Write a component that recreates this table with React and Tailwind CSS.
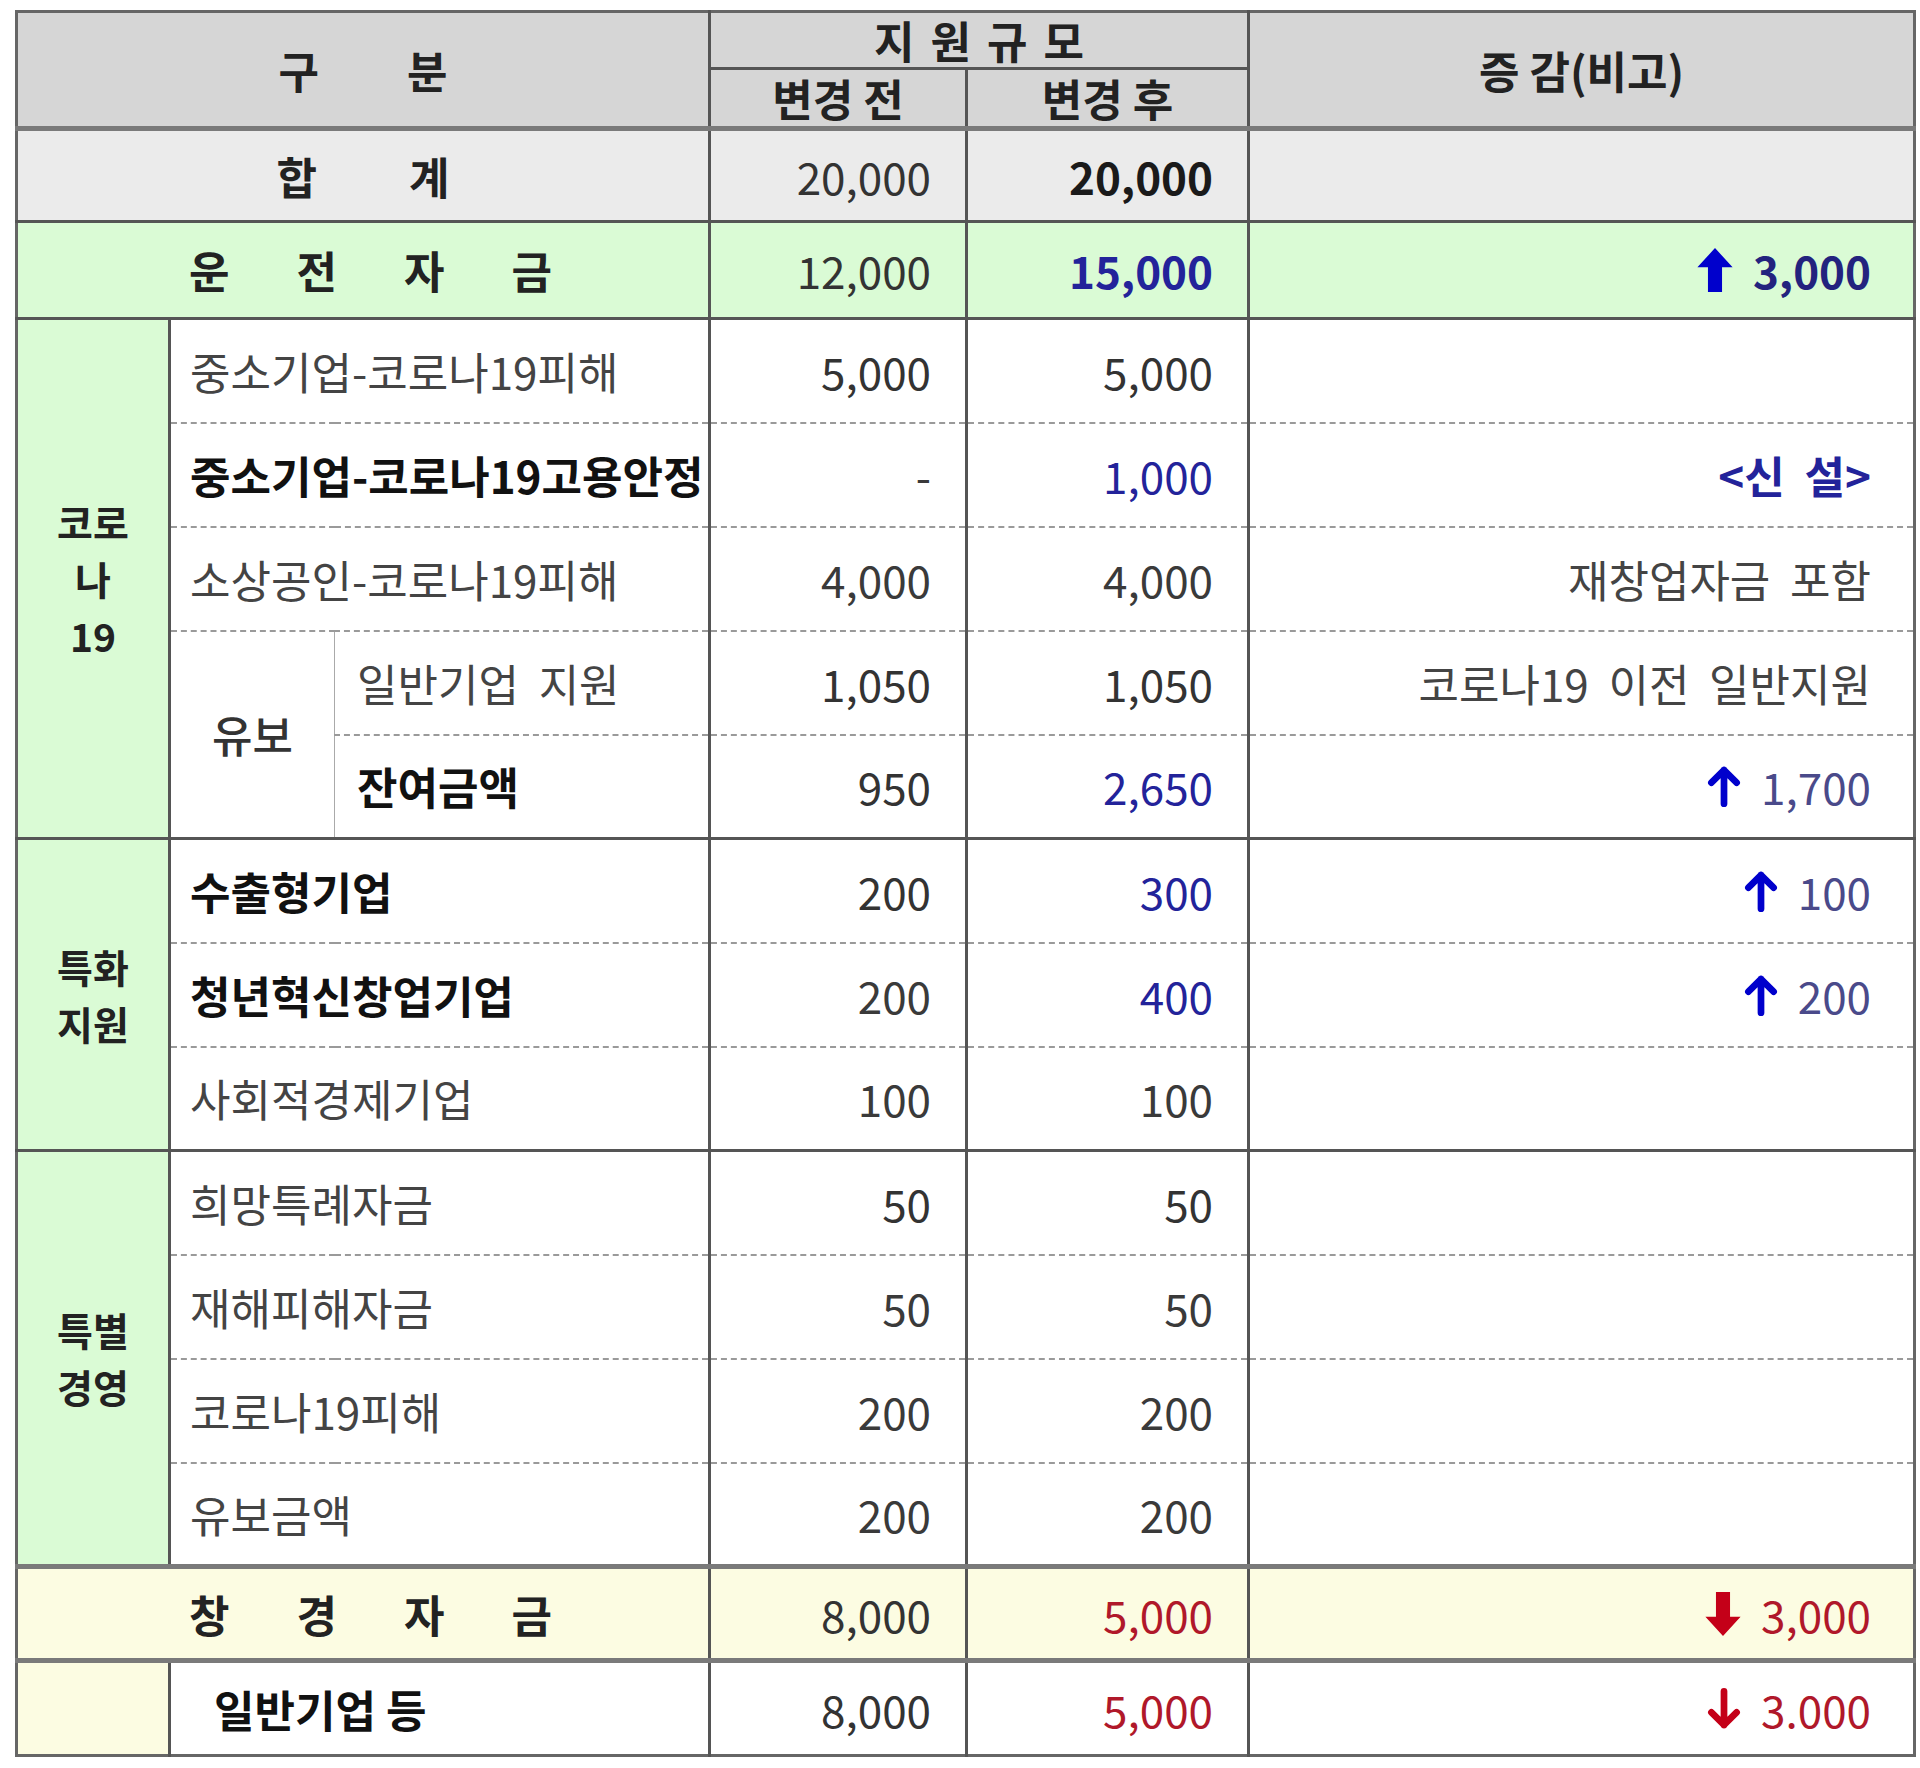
import React from "react";

// 색상
const GREEN = "bg-[#dafbd5]";
const YELLOW = "bg-[#fcfce2]";
const HEAD = "bg-[#d6d6d6]";

function ThickArrow({ down, color }) {
  return (
    <svg
      width="36"
      height="44"
      viewBox="0 0 20 25"
      className={down ? "rotate-180" : ""}
      fill={color}
    >
      <polygon points="10,0 20,11 14,11 14,25 6,25 6,11 0,11" />
    </svg>
  );
}

function ThinArrow({ down, color }) {
  return (
    <svg
      width="34"
      height="42"
      viewBox="0 0 20 25"
      className={down ? "rotate-180" : ""}
      fill="none"
      stroke={color}
      strokeWidth="4"
      strokeLinecap="round"
      strokeLinejoin="round"
    >
      <path d="M10 23 V3 M2.5 10.5 L10 3 L17.5 10.5" />
    </svg>
  );
}

function Spread({ chars, gap }) {
  return (
    <div className={`flex items-center justify-center ${gap}`}>
      {chars.map((c, i) => (
        <span key={i}>{c}</span>
      ))}
    </div>
  );
}

// 세로로 쌓인 구분 라벨
function Stack({ lines }) {
  return (
    <div className="flex flex-col items-center text-[39px] leading-[57px]">
      {lines.map((l, i) => (
        <span key={i}>{l}</span>
      ))}
    </div>
  );
}

const numCell = "text-right pr-[34px] border-r-[3px] border-r-[#555]";
const dash = "border-b-2 [border-bottom-style:dashed] border-b-[#9a9a9a]";
const solid = "border-b-[3px] border-b-[#555]";
const thick = "border-b-[5px] border-b-[#7a7a7a]";

function Row({ label, bold, before, after, afterColor, note, sep, sub }) {
  return (
    <tr className="h-[104px]">
      <td
        colSpan={sub ? 1 : 2}
        className={`${sep} border-r-[3px] border-r-[#555] pl-[19px] ${
          bold ? "font-bold text-[#111]" : "text-[#444]"
        }`}
      >
        {label}
      </td>
      <td className={`${sep} ${numCell} text-[#3a3a3a]`}>{before}</td>
      <td
        className={`${sep} ${numCell} ${
          afterColor || "text-[#3a3a3a]"
        }`}
      >
        {after}
      </td>
      <td className={`${sep} text-right pr-[42px]`}>{note}</td>
    </tr>
  );
}

function Change({ value, thick, down }) {
  const color = down ? "#c40018" : "#0000cc";
  return (
    <div className="flex items-center justify-end gap-[20px]">
      {thick ? (
        <ThickArrow down={down} color={color} />
      ) : (
        <ThinArrow down={down} color={color} />
      )}
      <span
        className={
          down
            ? "text-[#b0182a]"
            : thick
            ? "text-[#23237e] font-bold"
            : "text-[#4a4a8a]"
        }
      >
        {value}
      </span>
    </div>
  );
}

export default function App() {
  return (
    <div
      className="min-h-screen bg-white pt-[10px] pl-[15px] pr-[7px] pb-[10px] text-[44px] text-[#333]"
      style={{ fontFamily: '"Noto Sans CJK KR", "Noto Sans", sans-serif' }}
    >
      <table className="w-[1898px] table-fixed border-collapse border-[3px] border-[#666] leading-none">
        <colgroup>
          <col className="w-[153px]" />
          <col className="w-[165px]" />
          <col className="w-[375px]" />
          <col className="w-[257px]" />
          <col className="w-[282px]" />
          <col className="w-[666px]" />
        </colgroup>
        <thead>
          <tr className={`h-[57px] ${HEAD}`}>
            <th
              colSpan={3}
              rowSpan={2}
              className={`border-r-[3px] border-r-[#555] ${thick} font-bold text-[#222]`}
            >
              <Spread chars={["구", "분"]} gap="gap-[88px]" />
            </th>
            <th
              colSpan={2}
              className="border-r-[3px] border-r-[#555] border-b-[3px] border-b-[#555] font-bold text-[#222]"
            >
              <Spread chars={["지", "원", "규", "모"]} gap="gap-[16px]" />
            </th>
            <th rowSpan={2} className={`${thick} font-bold text-[#222]`}>
              증&nbsp;감(비고)
            </th>
          </tr>
          <tr className={`h-[60px] ${HEAD}`}>
            <th className={`border-r-[3px] border-r-[#555] ${thick} font-bold text-[#222]`}>
              변경&nbsp;전
            </th>
            <th className={`border-r-[3px] border-r-[#555] ${thick} font-bold text-[#222]`}>
              변경&nbsp;후
            </th>
          </tr>
        </thead>
        <tbody>
          {/* 합계 */}
          <tr className="h-[93px] bg-[#ebebeb]">
            <td colSpan={3} className={`${solid} border-r-[3px] border-r-[#555] font-bold text-[#222]`}>
              <Spread chars={["합", "계"]} gap="gap-[92px]" />
            </td>
            <td className={`${solid} ${numCell}`}>20,000</td>
            <td className={`${solid} ${numCell} font-bold text-[#1a1a1a]`}>20,000</td>
            <td className={solid}></td>
          </tr>

          {/* 운전자금 */}
          <tr className={`h-[97px] ${GREEN}`}>
            <td colSpan={3} className={`${solid} border-r-[3px] border-r-[#555] font-bold text-[#222]`}>
              <div className="pl-[171px] flex gap-[67px]">
                <span>운</span>
                <span>전</span>
                <span>자</span>
                <span>금</span>
              </div>
            </td>
            <td className={`${solid} ${numCell}`}>12,000</td>
            <td className={`${solid} ${numCell} font-bold text-[#23239a]`}>15,000</td>
            <td className={`${solid} text-right pr-[42px]`}>
              <Change value="3,000" thick />
            </td>
          </tr>

          {/* 코로나19 */}
          <tr className="h-[104px]">
            <td
              rowSpan={5}
              className={`${GREEN} ${solid} border-r-[3px] border-r-[#555] font-bold text-[#222]`}
            >
              <Stack lines={["코로", "나", "19"]} />
            </td>
            <td colSpan={2} className={`${dash} border-r-[3px] border-r-[#555] pl-[19px] text-[#444]`}>
              중소기업-코로나19피해
            </td>
            <td className={`${dash} ${numCell}`}>5,000</td>
            <td className={`${dash} ${numCell}`}>5,000</td>
            <td className={dash}></td>
          </tr>
          <Row
            label="중소기업-코로나19고용안정"
            bold
            before="-"
            after="1,000"
            afterColor="text-[#23239a]"
            note={<span className="font-bold text-[#23239a]">&lt;신&nbsp;&nbsp;설&gt;</span>}
            sep={dash}
          />
          <Row
            label="소상공인-코로나19피해"
            before="4,000"
            after="4,000"
            note={<span className="text-[#444]">재창업자금&nbsp;&nbsp;포함</span>}
            sep={dash}
          />
          <tr className="h-[104px]">
            <td
              rowSpan={2}
              className={`${solid} border-r border-r-[#aaa] text-center text-[#333] font-medium`}
            >
              유보
            </td>
            <td className={`${dash} border-r-[3px] border-r-[#555] pl-[22px] text-[#444]`}>
              일반기업&nbsp;&nbsp;지원
            </td>
            <td className={`${dash} ${numCell}`}>1,050</td>
            <td className={`${dash} ${numCell}`}>1,050</td>
            <td className={`${dash} text-right pr-[42px] text-[#444]`}>
              코로나19&nbsp;&nbsp;이전&nbsp;&nbsp;일반지원
            </td>
          </tr>
          <tr className="h-[104px]">
            <td className={`${solid} border-r-[3px] border-r-[#555] pl-[22px] font-bold text-[#111]`}>
              잔여금액
            </td>
            <td className={`${solid} ${numCell}`}>950</td>
            <td className={`${solid} ${numCell} text-[#23239a]`}>2,650</td>
            <td className={`${solid} text-right pr-[42px]`}>
              <Change value="1,700" />
            </td>
          </tr>

          {/* 특화지원 */}
          <tr className="h-[104px]">
            <td
              rowSpan={3}
              className={`${GREEN} ${solid} border-r-[3px] border-r-[#555] font-bold text-[#222]`}
            >
              <Stack lines={["특화", "지원"]} />
            </td>
            <td colSpan={2} className={`${dash} border-r-[3px] border-r-[#555] pl-[19px] font-bold text-[#111]`}>
              수출형기업
            </td>
            <td className={`${dash} ${numCell}`}>200</td>
            <td className={`${dash} ${numCell} text-[#23239a]`}>300</td>
            <td className={`${dash} text-right pr-[42px]`}>
              <Change value="100" />
            </td>
          </tr>
          <Row
            label="청년혁신창업기업"
            bold
            before="200"
            after="400"
            afterColor="text-[#23239a]"
            note={<Change value="200" />}
            sep={dash}
          />
          <Row label="사회적경제기업" before="100" after="100" sep={solid} />

          {/* 특별경영 */}
          <tr className="h-[104px]">
            <td
              rowSpan={4}
              className={`${GREEN} ${thick} border-r-[3px] border-r-[#555] font-bold text-[#222]`}
            >
              <Stack lines={["특별", "경영"]} />
            </td>
            <td colSpan={2} className={`${dash} border-r-[3px] border-r-[#555] pl-[19px] text-[#444]`}>
              희망특례자금
            </td>
            <td className={`${dash} ${numCell}`}>50</td>
            <td className={`${dash} ${numCell}`}>50</td>
            <td className={dash}></td>
          </tr>
          <Row label="재해피해자금" before="50" after="50" sep={dash} />
          <Row label="코로나19피해" before="200" after="200" sep={dash} />
          <Row label="유보금액" before="200" after="200" sep={thick} />

          {/* 창경자금 */}
          <tr className={`h-[94px] ${YELLOW}`}>
            <td
              colSpan={3}
              className={`${thick} border-r-[3px] border-r-[#555] font-bold text-[#222]`}
            >
              <div className="pl-[171px] flex gap-[67px]">
                <span>창</span>
                <span>경</span>
                <span>자</span>
                <span>금</span>
              </div>
            </td>
            <td className={`${thick} ${numCell}`}>8,000</td>
            <td className={`${thick} ${numCell} text-[#b0182a]`}>5,000</td>
            <td className={`${thick} text-right pr-[42px]`}>
              <Change value="3,000" thick down />
            </td>
          </tr>

          {/* 일반기업 등 */}
          <tr className="h-[95px]">
            <td className={`${YELLOW} border-r-[3px] border-r-[#555]`}></td>
            <td colSpan={2} className="border-r-[3px] border-r-[#555] pl-[43px] font-bold text-[#111]">
              일반기업&nbsp;등
            </td>
            <td className={numCell}>8,000</td>
            <td className={`${numCell} text-[#b0182a]`}>5,000</td>
            <td className="text-right pr-[42px]">
              <Change value="3.000" down />
            </td>
          </tr>
        </tbody>
      </table>
    </div>
  );
}
